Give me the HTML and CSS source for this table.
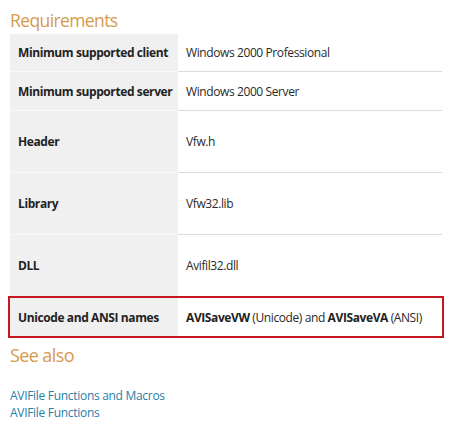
FILE: index.html
```html
<!DOCTYPE html>
<html>
<head>
<meta charset="utf-8">
<link rel="stylesheet" href="styles.css">
</head>
<body>
<h2 class="heading">Requirements</h2>
<div class="reqs">
  <div class="row r-short"><div class="label">Minimum supported client</div><div class="value">Windows 2000 Professional</div></div>
  <div class="row r-short2"><div class="label">Minimum supported server</div><div class="value">Windows 2000 Server</div></div>
  <div class="row r-tall"><div class="label">Header</div><div class="value">Vfw.h</div></div>
  <div class="row r-tall"><div class="label">Library</div><div class="value">Vfw32.lib</div></div>
  <div class="row r-tall"><div class="label">DLL</div><div class="value">Avifil32.dll</div></div>
  <div class="row r-names highlight"><div class="label">Unicode and ANSI names</div><div class="value"><b>AVISaveVW</b> (Unicode) and <b>AVISaveVA</b> (ANSI)</div></div>
</div>
<h2 class="heading see">See also</h2>
<div class="links">
  <a href="#">AVIFile Functions and Macros</a>
  <a href="#">AVIFile Functions</a>
</div>
</body>
</html>
```
FILE: styles.css
```css
body {
  margin: 0;
  padding: 8px 10px 0 10px;
  background: #fff;
  font-family: "Open Sans", "Noto Sans", sans-serif;
  font-size: 12px;
  letter-spacing: -0.4px;
  color: #2a2a2a;
}
.heading {
  margin: 0;
  font-weight: normal;
  font-size: 17.5px;
  letter-spacing: -0.6px;
  line-height: 24px;
  color: #d69a4e;
}
.reqs {
  margin-top: 2px;
  width: 432px;
  display: flex;
  flex-direction: column;
}
.row {
  display: flex;
}
.label {
  width: 160px;
  flex: none;
  background: #f0f0f0;
  padding-left: 8px;
  font-weight: bold;
  display: flex;
  align-items: center;
  border-bottom: 1px solid #f8f8f8;
  color: #222;
  white-space: nowrap;
}
.value {
  flex: 1;
  padding-left: 8px;
  display: flex;
  align-items: center;
  border-bottom: 1px solid #dcdcdc;
  white-space: pre;
}
.value b { color: #222; }
.r-short { height: 38px; }
.r-short2 { height: 39px; }
.r-tall { height: 62px; }
.r-names { height: 40px; }
.r-names .label, .r-names .value { border-bottom: none; }
.highlight {
  outline: 2px solid #c4171f;
  outline-offset: -1px;
  width: 434px;
  margin-left: -1px;
  padding-left: 1px;
  box-sizing: border-box;
}
.see {
  margin-top: 6px;
  font-size: 18px;
}
.links {
  margin-top: 20px;
  display: flex;
  flex-direction: column;
  line-height: 17px;
  letter-spacing: -0.3px;
}
.links a {
  color: #2a7eaa;
  text-decoration: none;
  align-self: flex-start;
}
```
